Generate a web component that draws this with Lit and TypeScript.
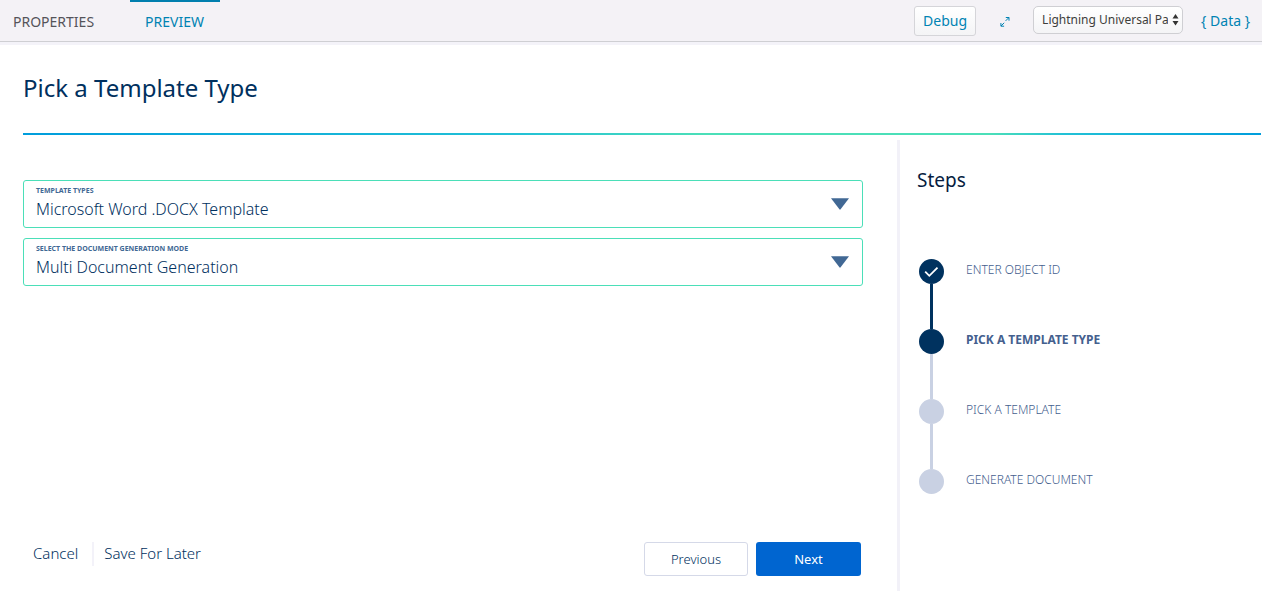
import { LitElement, html, css, nothing } from "lit";
import { customElement } from "lit/decorators.js";
import { classMap } from "lit/directives/class-map.js";

type StepState = "done" | "current" | "todo";

interface Step {
  label: string;
  state: StepState;
}

interface Field {
  id: string;
  label: string;
  options: string[];
}

const STEPS: Step[] = [
  { label: "Enter Object ID", state: "done" },
  { label: "Pick a Template Type", state: "current" },
  { label: "Pick a Template", state: "todo" },
  { label: "Generate Document", state: "todo" },
];

const FIELDS: Field[] = [
  { id: "template-type", label: "Template Types", options: ["Microsoft Word .DOCX Template"] },
  { id: "generation-mode", label: "Select the Document Generation Mode", options: ["Multi Document Generation"] },
];

@customElement("preview-toolbar")
class PreviewToolbar extends LitElement {
  static styles = css`
    :host {
      display: block;
      background: #f4f2f6;
      border-bottom: 1px solid #cfcfd3;
      box-shadow: 0 3px 0 #f4f3f9;
    }
    .bar {
      display: flex;
      align-items: flex-start;
      height: 41px;
    }
    .tabs {
      display: flex;
      flex: 1;
      gap: 20px;
    }
    .tab {
      box-sizing: border-box;
      height: 41px;
      padding: 0 16px 0 15px;
      border: 0;
      border-top: 2px solid transparent;
      background: none;
      color: #54545a;
      font: 14px/38px "Noto Sans", sans-serif;
      text-transform: uppercase;
    }
    .tab:first-child {
      padding-left: 13px;
    }
    .tab.active {
      border-top-color: #007fae;
      color: #0083b3;
    }
    .debug {
      box-sizing: border-box;
      width: 62px;
      height: 30px;
      margin-top: 6px;
      padding: 0;
      border: 1px solid #d5d5d9;
      border-radius: 3px;
      background: linear-gradient(#ffffff, #f4f4f6);
      color: #0083b3;
      font: 14px/28px "Noto Sans", sans-serif;
    }
    .expand {
      display: flex;
      margin: 16px 23px 0 24px;
      padding: 0;
      border: 0;
      background: none;
      color: #0083b3;
    }
    .device {
      display: grid;
      width: 150px;
      height: 28px;
      margin-top: 6px;
    }
    .device select {
      grid-area: 1 / 1;
      box-sizing: border-box;
      width: 100%;
      min-width: 0;
      padding: 0 14px 0 8px;
      border: 1px solid #cfcfd3;
      border-radius: 5px;
      background: linear-gradient(#ffffff, #f4f4f6);
      color: #3e3e3c;
      font: 12px/24px "Noto Sans", sans-serif;
      appearance: none;
    }
    .device svg {
      grid-area: 1 / 1;
      place-self: center end;
      margin-right: 4px;
      pointer-events: none;
    }
    .data {
      margin: 6px 12px 0 18px;
      padding: 0;
      border: 0;
      background: none;
      color: #0083b3;
      font: 14px/30px "Noto Sans", sans-serif;
    }
  `;

  render() {
    return html`
      <div class="bar">
        <div class="tabs" role="tablist">
          <button class="tab" role="tab" aria-selected="false">Properties</button>
          <button class="tab active" role="tab" aria-selected="true">Preview</button>
        </div>
        <button class="debug">Debug</button>
        <button class="expand" aria-label="Expand">
          <svg width="10" height="12" viewBox="0 0 10 12" fill="none" stroke="currentColor">
            <path d="M5.6 4.900 8.800 1.700M5.800 1.500H9V4.700M4.200 6.800 1 10M.9 7V10.200H4.100" />
          </svg>
        </button>
        <div class="device">
          <select aria-label="Page layout">
            <option>Lightning Universal Page</option>
          </select>
          <svg width="7" height="12" viewBox="0 0 7 12" fill="#333">
            <path d="M3.5 0 6.5 4.6H.5ZM3.5 11.6 .5 7H6.5Z" />
          </svg>
        </div>
        <button class="data">{ Data }</button>
      </div>
    `;
  }
}

@customElement("template-form")
class TemplateForm extends LitElement {
  static styles = css`
    :host {
      display: flex;
      flex-direction: column;
      padding: 45px 34px 15px 0;
    }
    .fields {
      display: grid;
      flex: 1;
      align-content: start;
      gap: 10px;
    }
    .field {
      display: grid;
      grid-template-rows: 22px 26px;
    }
    .field label {
      z-index: 1;
      grid-area: 1 / 1;
      padding-left: 13px;
      color: #416894;
      font-size: 7px;
      font-weight: 700;
      line-height: 22px;
      text-transform: uppercase;
      pointer-events: none;
    }
    .field select {
      grid-area: 1 / 1 / 3 / 2;
      box-sizing: border-box;
      width: 100%;
      height: 48px;
      padding: 10px 40px 0 12px;
      border: 1px solid #4bdfb8;
      border-radius: 3px;
      background: #fff;
      color: #00305e;
      font: 300 16px/24px "Noto Sans", sans-serif;
      appearance: none;
    }
    .field svg {
      grid-area: 1 / 1 / 3 / 2;
      place-self: center end;
      margin-right: 14px;
      pointer-events: none;
    }
    .actions {
      display: flex;
      align-items: flex-start;
    }
    .links {
      display: flex;
      flex: 1;
    }
    .link {
      padding: 0 14px 2px 10px;
      color: #00305e;
      font-size: 15px;
      font-weight: 300;
      line-height: 22px;
      text-decoration: none;
    }
    .link + .link {
      border-left: 2px solid #f3f2f9;
    }
    .btn {
      box-sizing: border-box;
      width: 105px;
      height: 34px;
      margin-right: 2px;
      padding: 0;
      border: 0;
      border-radius: 3px;
      background: #0065d0;
      color: #fff;
      font: 13px/34px "Noto Sans", sans-serif;
    }
    .btn.outline {
      width: 104px;
      margin-right: 8px;
      border: 1px solid #d5d9e8;
      background: #fff;
      color: #00305e;
      font-weight: 300;
      line-height: 32px;
    }
  `;

  render() {
    return html`
      <div class="fields">
        ${FIELDS.map(
          (field) => html`
            <div class="field">
              <label for=${field.id}>${field.label}</label>
              <select id=${field.id}>
                ${field.options.map((option) => html`<option>${option}</option>`)}
              </select>
              <svg width="18" height="12" viewBox="0 0 18 12" fill="#416894">
                <path d="M0 .3H18L9.600 11.300Q9 12 8.400 11.300Z" />
              </svg>
            </div>
          `,
        )}
      </div>
      <div class="actions">
        <nav class="links">
          <a class="link" href="#cancel">Cancel</a>
          <a class="link" href="#save">Save For Later</a>
        </nav>
        <button class="btn outline">Previous</button>
        <button class="btn">Next</button>
      </div>
    `;
  }
}

@customElement("step-list")
class StepList extends LitElement {
  static styles = css`
    :host {
      display: block;
      margin-top: 5px;
      padding: 27px 0 0 17px;
      border-left: 3px solid #f2f1f8;
    }
    .title {
      margin: 0;
      color: #061c3f;
      font-size: 19px;
      font-weight: 400;
      line-height: 26px;
    }
    .steps {
      margin: 66px 0 0;
      padding: 0 0 0 2px;
      list-style: none;
    }
    .step {
      display: grid;
      grid-template-columns: 25px 1fr;
      grid-template-rows: 25px 45px;
      column-gap: 22px;
      color: #44608e;
      font-size: 12px;
      font-weight: 300;
      line-height: 21px;
      text-transform: uppercase;
    }
    .dot {
      display: grid;
      place-items: center;
      border-radius: 50%;
      background: #c9d1e3;
    }
    .line {
      grid-row: 2;
      justify-self: center;
      width: 3px;
      background: #c9d1e3;
    }
    .step:last-child {
      grid-template-rows: 25px;
    }
    .step.done .dot,
    .step.done .line,
    .step.current .dot {
      background: #00325f;
    }
    .step.current {
      font-weight: 700;
    }
  `;

  render() {
    return html`
      <h2 class="title">Steps</h2>
      <ol class="steps">
        ${STEPS.map(
          (step, index) => html`
            <li
              class=${classMap({ step: true, [step.state]: true })}
              aria-current=${step.state === "current" ? "step" : nothing}
            >
              <span class="dot">
                ${step.state === "done"
                  ? html`<svg width="15" height="12" viewBox="0 0 15 12" fill="none" stroke="#fff" stroke-width="1.800">
                      <path d="M1.200 5.700 5.300 9.800 13.500 1.600" />
                    </svg>`
                  : nothing}
              </span>
              <span class="name">${step.label}</span>
              ${index < STEPS.length - 1 ? html`<span class="line"></span>` : nothing}
            </li>
          `,
        )}
      </ol>
    `;
  }
}

@customElement("app-root")
class AppRoot extends LitElement {
  static styles = css`
    :host {
      display: flex;
      flex-direction: column;
      min-height: 100vh;
      background: #fff;
      font-family: "Noto Sans", sans-serif;
    }
    .header {
      margin: 0 1px 0 23px;
      padding: 30px 0 29px;
      border-bottom: 2px solid;
      border-image: linear-gradient(90deg, #009ddc, #22c1d6 40%, #4bdfb8 55%, #4bdfb8 78%, #22c1d6 84%, #009ddc) 1;
    }
    .title {
      margin: 0;
      color: #00305e;
      font-size: 24px;
      font-weight: 400;
      line-height: 32px;
    }
    .content {
      display: grid;
      flex: 1;
      grid-template-columns: minmax(0, 1fr) 365px;
      padding-left: 23px;
    }
  `;

  render() {
    return html`
      <preview-toolbar></preview-toolbar>
      <header class="header"><h1 class="title">Pick a Template Type</h1></header>
      <main class="content">
        <template-form></template-form>
        <step-list></step-list>
      </main>
    `;
  }
}
